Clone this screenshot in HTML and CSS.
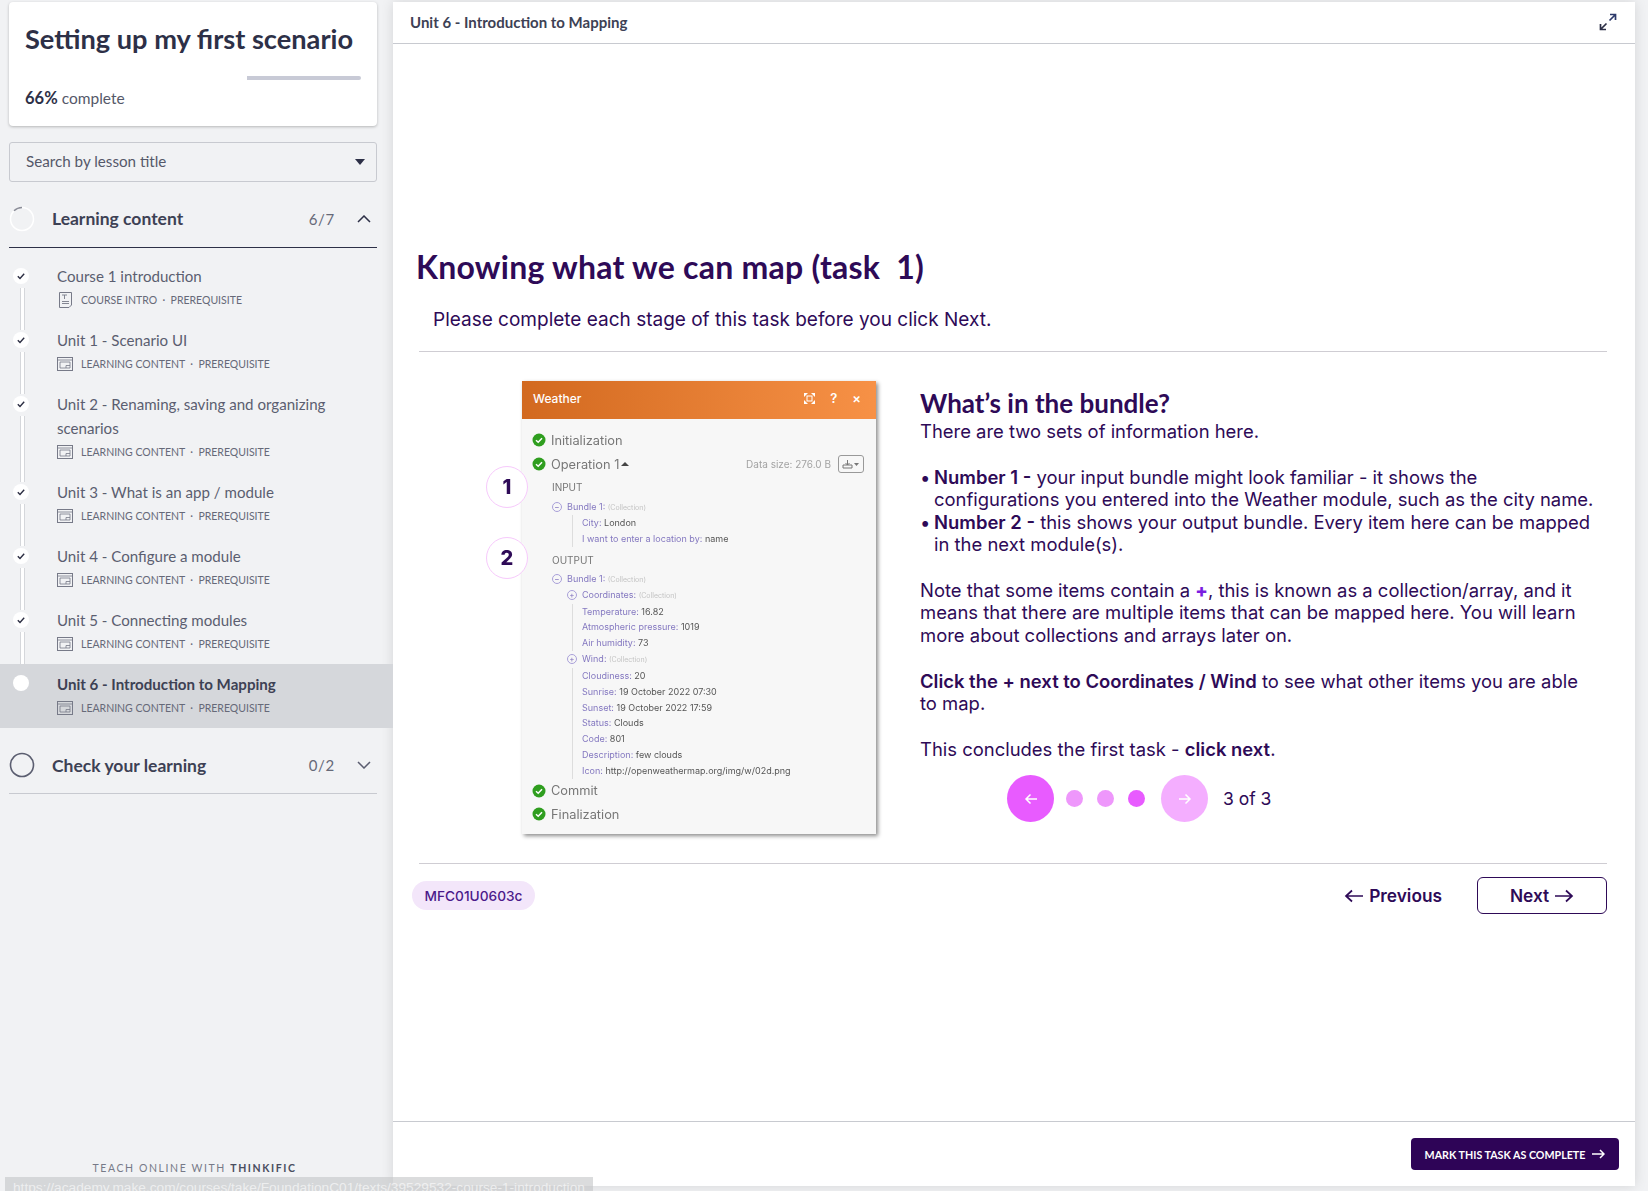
FILE: index.html
```html
<!DOCTYPE html>
<html lang="en">
<head>
  <meta charset="UTF-8" />
  <title>Unit 6 - Introduction to Mapping</title>
  <link rel="stylesheet" href="styles.css">
</head>
<body>
  <svg class="sprite" width="0" height="0">
    <symbol id="ic-screen" viewBox="0 0 16 14">
      <rect x="0.5" y="0.5" width="15" height="13" fill="none" stroke="currentColor"/>
      <path d="M0.5 3h15M3 5h10v6H3zM9 11V8.500h4" fill="none" stroke="currentColor" stroke-width="0.8"/>
    </symbol>
    <symbol id="ic-check" viewBox="0 0 16 16">
      <circle cx="8" cy="8" r="8" fill="#fff"/>
      <path d="M4.800 8.200l2.200 2.200 4.200-4.600" fill="none" stroke="#2b2d42" stroke-width="1.400"/>
    </symbol>
    <symbol id="ic-ok" viewBox="0 0 14 14">
      <circle cx="7" cy="7" r="6.500" fill="#2f9e1f"/>
      <path d="M4 7.200l2.200 2.100L10 5.200" fill="none" stroke="#fff" stroke-width="1.500"/>
    </symbol>
  </svg>

  <aside class="sidebar">
    <div class="course-card">
      <h1>Setting up my first scenario</h1>
      <div class="progress"><span class="progress-done"></span></div>
      <p class="progress-text"><b>66%</b> complete</p>
    </div>

    <div class="search">
      <span>Search by lesson title</span>
      <span class="caret"></span>
    </div>

    <div class="chapter chapter-open">
      <svg class="ring" width="26" height="26" viewBox="0 0 26 26">
        <circle cx="13" cy="13" r="11.500" fill="none" stroke="#fff" stroke-width="1.500"/>
        <path d="M5 4.800A11.500 11.500 0 0 1 13 1.500" fill="none" stroke="#8b8d98" stroke-width="1.500"/>
      </svg>
      <span class="chapter-name">Learning content</span>
      <span class="chapter-count">6/7</span>
      <svg class="chevron" width="14" height="8" viewBox="0 0 14 8"><path d="M1 7l6-6 6 6" fill="none" stroke="#2d3047" stroke-width="1.500"/></svg>
    </div>

    <ul class="lessons">
      <li class="lesson done">
        <svg class="dot" width="16" height="16"><use href="#ic-check"/></svg>
        <div class="lesson-title">Course 1 introduction</div>
        <div class="lesson-meta"><svg class="meta-icon doc" width="13" height="16" viewBox="0 0 13 16">
            <path d="M0.500 0.500h12v12.500l-2.500 2.500h-9.500z" fill="none" stroke="currentColor"/>
            <path d="M3 3h5M5.500 3v4M3 9.500h7M3 11.500h7" fill="none" stroke="currentColor" stroke-width="0.900"/>
          </svg>COURSE INTRO &nbsp;·&nbsp; PREREQUISITE</div>
      </li>
      <li class="lesson done">
        <svg class="dot" width="16" height="16"><use href="#ic-check"/></svg>
        <div class="lesson-title">Unit 1 - Scenario UI</div>
        <div class="lesson-meta"><svg class="meta-icon" width="16" height="14"><use href="#ic-screen"/></svg>LEARNING CONTENT &nbsp;·&nbsp; PREREQUISITE</div>
      </li>
      <li class="lesson done">
        <svg class="dot" width="16" height="16"><use href="#ic-check"/></svg>
        <div class="lesson-title">Unit 2 - Renaming, saving and organizing scenarios</div>
        <div class="lesson-meta"><svg class="meta-icon" width="16" height="14"><use href="#ic-screen"/></svg>LEARNING CONTENT &nbsp;·&nbsp; PREREQUISITE</div>
      </li>
      <li class="lesson done">
        <svg class="dot" width="16" height="16"><use href="#ic-check"/></svg>
        <div class="lesson-title">Unit 3 - What is an app / module</div>
        <div class="lesson-meta"><svg class="meta-icon" width="16" height="14"><use href="#ic-screen"/></svg>LEARNING CONTENT &nbsp;·&nbsp; PREREQUISITE</div>
      </li>
      <li class="lesson done">
        <svg class="dot" width="16" height="16"><use href="#ic-check"/></svg>
        <div class="lesson-title">Unit 4 - Configure a module</div>
        <div class="lesson-meta"><svg class="meta-icon" width="16" height="14"><use href="#ic-screen"/></svg>LEARNING CONTENT &nbsp;·&nbsp; PREREQUISITE</div>
      </li>
      <li class="lesson done">
        <svg class="dot" width="16" height="16"><use href="#ic-check"/></svg>
        <div class="lesson-title">Unit 5 - Connecting modules</div>
        <div class="lesson-meta"><svg class="meta-icon" width="16" height="14"><use href="#ic-screen"/></svg>LEARNING CONTENT &nbsp;·&nbsp; PREREQUISITE</div>
      </li>
      <li class="lesson current">
        <span class="dot dot-plain"></span>
        <div class="lesson-title">Unit 6 - Introduction to Mapping</div>
        <div class="lesson-meta"><svg class="meta-icon" width="16" height="14"><use href="#ic-screen"/></svg>LEARNING CONTENT &nbsp;·&nbsp; PREREQUISITE</div>
      </li>
    </ul>

    <div class="chapter chapter-closed">
      <svg class="ring" width="26" height="26" viewBox="0 0 26 26">
        <circle cx="13" cy="13" r="11.500" fill="none" stroke="#5b5e70" stroke-width="1.600"/>
      </svg>
      <span class="chapter-name">Check your learning</span>
      <span class="chapter-count">0/2</span>
      <svg class="chevron" width="14" height="8" viewBox="0 0 14 8"><path d="M1 1l6 6 6-6" fill="none" stroke="#5b5e70" stroke-width="1.500"/></svg>
    </div>

    <div class="powered">TEACH ONLINE WITH <b>THINKIFIC</b></div>
  </aside>

  <main class="player">
    <header class="player-head">
      <span>Unit 6 - Introduction to Mapping</span>
      <svg width="18" height="18" viewBox="0 0 18 18">
        <path d="M10.500 7.500L16 2M11 1.500h5.500V7" fill="none" stroke="#2d3a6b" stroke-width="1.700"/>
        <path d="M7.500 10.500L2 16M7 16.500H1.500V11" fill="none" stroke="#2d3047" stroke-width="1.700"/>
      </svg>
    </header>

    <section class="player-body">
      <h2>Knowing what we can map (task&nbsp; 1)</h2>
      <p class="intro">Please complete each stage of this task before you click Next.</p>
      <hr>

      <div class="task">
        <div class="markers">
          <span class="marker">1</span>
          <span class="marker">2</span>
        </div>

        <div class="weather">
          <div class="weather-head">
            <span>Weather</span>
            <span class="weather-tools">
              <svg width="11" height="11" viewBox="0 0 11 11"><path d="M0 0h4L0 4zM11 0v4L7 0zM0 11V7l4 4zM11 11H7l4-4z" fill="#fff"/><rect x="3" y="3" width="5" height="5" fill="none" stroke="#fff"/></svg>
              <i>?</i>
              <i>×</i>
            </span>
          </div>
          <div class="weather-body">
            <div class="stage"><svg width="14" height="14"><use href="#ic-ok"/></svg>Initialization</div>
            <div class="stage stage-op">
              <svg width="14" height="14"><use href="#ic-ok"/></svg>Operation 1 <span class="up"></span>
              <span class="data-size">Data size: 276.0 B</span>
              <span class="data-btn">
                <svg width="18" height="10" viewBox="0 0 18 10"><path d="M1 6h9v3H1zM5.500 1v5M3.500 4l2 2 2-2" fill="none" stroke="#777"/><path d="M12 4h5l-2.500 3z" fill="#777"/></svg>
              </span>
            </div>
            <div class="tree">
              <div class="tree-title">INPUT</div>
              <div class="row bundle"><span class="toggle">−</span><em>Bundle 1:</em> <small>(Collection)</small></div>
              <div class="row lv2"><em>City:</em> London</div>
              <div class="row lv2"><em>I want to enter a location by:</em> name</div>
              <div class="tree-title tree-out">OUTPUT</div>
              <div class="row bundle"><span class="toggle">−</span><em>Bundle 1:</em> <small>(Collection)</small></div>
              <div class="row sub"><span class="toggle">+</span><em>Coordinates:</em> <small>(Collection)</small></div>
              <div class="row lv2"><em>Temperature:</em> 16.82</div>
              <div class="row lv2"><em>Atmospheric pressure:</em> 1019</div>
              <div class="row lv2"><em>Air humidity:</em> 73</div>
              <div class="row sub"><span class="toggle">+</span><em>Wind:</em> <small>(Collection)</small></div>
              <div class="row lv2"><em>Cloudiness:</em> 20</div>
              <div class="row lv2"><em>Sunrise:</em> 19 October 2022 07:30</div>
              <div class="row lv2"><em>Sunset:</em> 19 October 2022 17:59</div>
              <div class="row lv2"><em>Status:</em> Clouds</div>
              <div class="row lv2"><em>Code:</em> 801</div>
              <div class="row lv2"><em>Description:</em> few clouds</div>
              <div class="row lv2"><em>Icon:</em> http://openweathermap.org/img/w/02d.png</div>
            </div>
            <div class="stage"><svg width="14" height="14"><use href="#ic-ok"/></svg>Commit</div>
            <div class="stage stage-last"><svg width="14" height="14"><use href="#ic-ok"/></svg>Finalization</div>
          </div>
        </div>

        <div class="copy">
          <h3>What’s in the bundle?</h3>
          <p>There are two sets of information here.</p>
          <ul>
            <li><b>Number 1 -</b> your input bundle might look familiar - it shows the configurations you entered into the Weather module, such as the city name.</li>
            <li><b>Number 2 -</b> this shows your output bundle. Every item here can be mapped in the next module(s).</li>
          </ul>
          <p>Note that some items contain a <b class="plus">+</b>, this is known as a collection/array, and it means that there are multiple items that can be mapped here. You will learn more about collections and arrays later on.</p>
          <p><b>Click the + next to Coordinates / Wind</b> to see what other items you are able to map.</p>
          <p>This concludes the first task - <b>click next</b>.</p>
          <div class="pager">
            <span class="pager-btn">
              <svg width="14" height="12" viewBox="0 0 14 12"><path d="M13 6H2M6.500 1.500L2 6l4.500 4.500" fill="none" stroke="#fff" stroke-width="1.500"/></svg>
            </span>
            <span class="pip"></span>
            <span class="pip"></span>
            <span class="pip pip-on"></span>
            <span class="pager-btn pager-off">
              <svg width="14" height="12" viewBox="0 0 14 12"><path d="M1 6h11M7.500 1.500L12 6l-4.500 4.500" fill="none" stroke="#fff" stroke-width="1.500"/></svg>
            </span>
            <span class="pager-text">3 of 3</span>
          </div>
        </div>
      </div>

      <hr class="rule-end">

      <div class="task-nav">
        <span class="code-tag">MFC01U0603c</span>
        <a class="nav-prev">
          <svg width="20" height="14" viewBox="0 0 20 14"><path d="M19 7H2M8 1.500L2 7l6 5.500" fill="none" stroke="#2e0a57" stroke-width="1.700"/></svg>
          Previous
        </a>
        <a class="nav-next">
          Next
          <svg width="20" height="14" viewBox="0 0 20 14"><path d="M1 7h17M12 1.500L18 7l-6 5.500" fill="none" stroke="#2e0a57" stroke-width="1.700"/></svg>
        </a>
      </div>
    </section>

    <footer class="player-foot">
      <button type="button">MARK THIS TASK AS COMPLETE
        <svg width="13" height="10" viewBox="0 0 13 10"><path d="M0 5h11.500M8 1l4 4-4 4" fill="none" stroke="#fff" stroke-width="1.500"/></svg>
      </button>
    </footer>
  </main>

  <div class="status-bar">https://academy.make.com/courses/take/FoundationC01/texts/39529532-course-1-introduction</div>
</body>
</html>
```

FILE: styles.css
```css
* {
    box-sizing: border-box;
}
html, body {
    height: 100%;
}
body {
    margin: 0;
    height: 1191px;
    overflow: hidden;
    display: flex;
    background: #f1f2f4;
    font-family: "Inter", Arial, sans-serif;
    color: #2e0a57;
}
.sprite {
    position: absolute;
}

/* sidebar */
.sidebar {
    width: 393px;
    flex: none;
    display: flex;
    flex-direction: column;
    padding-top: 2px;
    font-family: "Lato", Arial, sans-serif;
    color: #3d4154;
}
.course-card {
    width: 368px;
    height: 124px;
    margin-left: 9px;
    padding: 18px 16px 0;
    background: #fff;
    border-radius: 4px;
    box-shadow: 0 1px 3px rgba(0,0,0,.25);
}
.course-card h1 {
    margin: 0;
    font-size: 27.200px;
    line-height: 37px;
    font-weight: 700;
    color: #2d3047;
    white-space: nowrap;
}
.progress {
    height: 4px;
    margin-top: 19px;
    background: #c8cad6;
    border-radius: 2px;
}
.progress-done {
    display: block;
    width: 66%;
    height: 4px;
    background: #fff;
}
.progress-text {
    margin: 8px 0 0;
    font-size: 15.500px;
    line-height: 20px;
    color: #555869;
}
.progress-text b {
    font-size: 16.500px;
    font-weight: 700;
    color: #2d3047;
}
.search {
    width: 368px;
    height: 40px;
    margin: 16px 0 0 9px;
    padding: 0 11px 0 16px;
    display: flex;
    align-items: center;
    justify-content: space-between;
    border: 1px solid #c8cad0;
    border-radius: 3px;
    font-size: 15.200px;
    line-height: 36px;
    color: #555869;
}
.search span:first-child {
    margin-top: -2px;
}
.caret {
    border-left: 5px solid transparent;
    border-right: 5px solid transparent;
    border-top: 6px solid #2d3047;
}
.chapter {
    width: 368px;
    margin-left: 9px;
    display: flex;
    align-items: center;
    border-bottom: 1px solid #2d3047;
}
.chapter-open {
    height: 66px;
    padding-top: 8px;
}
.chapter-closed {
    height: 66px;
    padding-top: 9px;
    border-bottom-color: #c8cad0;
}
.ring {
    flex: none;
    margin-right: 17px;
}
.chapter-name {
    flex: 1;
    font-size: 17.500px;
    font-weight: 700;
    color: #3d4154;
}
.chapter-count {
    font-size: 15px;
    letter-spacing: .7px;
    color: #666978;
    margin-right: 22px;
}
.chevron {
    margin-right: 6px;
}
.lessons {
    list-style: none;
    margin: 8px 0 0;
    padding: 0;
}
.lesson {
    position: relative;
    padding: 8px 40px 0 57px;
    height: 64px;
}
.lesson:nth-child(3) {
    height: 88px;
}
.lesson.done::after {
    content: "";
    position: absolute;
    left: 20px;
    top: 32px;
    bottom: -10px;
    width: 3px;
    background: #fff;
    border-left: 1px solid #d5d7db;
    border-right: 1px solid #d5d7db;
}
.dot {
    position: absolute;
    left: 13px;
    top: 12px;
}
.dot-plain {
    width: 16px;
    height: 16px;
    top: 11px;
    border-radius: 50%;
    background: #fff;
}
.lesson-title {
    font-size: 15.100px;
    line-height: 24px;
    color: #5b5e70;
}
.lesson-meta {
    display: flex;
    align-items: center;
    height: 22px;
    margin-top: 1px;
    font-size: 10.500px;
    color: #666978;
    white-space: pre;
}
.meta-icon {
    flex: none;
    margin-right: 8px;
    color: #777a88;
}
.meta-icon.doc {
    margin: 0 9px 0 2px;
}
.current {
    background: #d5d7db;
}
.current .lesson-title {
    font-weight: 700;
    color: #3d4154;
}
.powered {
    margin-top: auto;
    margin-bottom: 17px;
    padding-right: 4px;
    text-align: center;
    font-size: 10.500px;
    letter-spacing: 1.600px;
    color: #777a88;
}
.powered b {
    font-weight: 700;
    color: #4a4e60;
}

/* player */
.player {
    width: 1242px;
    height: 1184px;
    margin-top: 2px;
    flex: none;
    display: flex;
    flex-direction: column;
    background: #fff;
    box-shadow: 0 0 12px rgba(0,0,0,.12);
}
.player-head {
    height: 42px;
    flex: none;
    padding: 0 18px 2px 17px;
    display: flex;
    align-items: center;
    justify-content: space-between;
    border-bottom: 1px solid #c8cad0;
    font-family: "Lato", Arial, sans-serif;
    font-weight: 700;
    font-size: 15px;
    color: #3d4154;
}
.player-body {
    flex: 1;
    padding: 201px 28px 0 26px;
}
.player-body h2 {
    margin: 0 0 0 -3px;
    font-family: "Lato", Arial, sans-serif;
    font-size: 32px;
    line-height: 44px;
    font-weight: 700;
    letter-spacing: .25px;
    color: #2e0a57;
}
.intro {
    margin: 19px 0 0 14px;
    font-size: 19px;
    line-height: 24px;
    color: #2e0a57;
}
.player-body hr {
    height: 1px;
    margin: 19px 0 0;
    border: 0;
    background: #cfcdd3;
}
.task {
    display: flex;
    height: 511px;
}
.markers {
    width: 103px;
    flex: none;
    padding-top: 114px;
    display: flex;
    flex-direction: column;
    align-items: flex-end;
    gap: 29px;
    position: relative;
    z-index: 1;
}
.marker {
    width: 42px;
    height: 42px;
    margin-right: -6px;
    display: flex;
    align-items: center;
    justify-content: center;
    border: 1px solid #f6c9fb;
    border-radius: 50%;
    background: #fff;
    font-size: 20px;
    font-weight: 800;
    color: #2e0a57;
}

/* weather module shot */
.weather {
    width: 354px;
    height: 453px;
    margin-top: 29px;
    flex: none;
    background: #f7f7f7;
    box-shadow: 2px 2px 4px rgba(0,0,0,.45);
    filter: blur(.5px);
}
.weather-head {
    height: 38px;
    padding: 0 15px 4px 11px;
    display: flex;
    align-items: center;
    justify-content: space-between;
    background: linear-gradient(90deg, #d2691f, #f79146);
    color: #fff;
    font-size: 12px;
    font-weight: 500;
}
.weather-tools {
    display: flex;
    align-items: center;
    gap: 15px;
}
.weather-tools i {
    font-style: normal;
    font-size: 13px;
    font-weight: 600;
}
.weather-body {
    padding: 9px 12px 0 10px;
}
.stage {
    display: flex;
    align-items: center;
    gap: 5px;
    height: 24px;
    font-size: 12.800px;
    color: #777;
}
.stage-last {
    height: 23px;
}
.up {
    width: 0;
    height: 0;
    margin-left: -3px;
    border-left: 4px solid transparent;
    border-right: 4px solid transparent;
    border-bottom: 4px solid #444;
}
.data-size {
    margin-left: auto;
    margin-right: 2px;
    font-size: 10px;
    color: #a3a3a3;
}
.data-btn {
    width: 26px;
    height: 18px;
    display: flex;
    align-items: center;
    justify-content: center;
    border: 1px solid #999;
    border-radius: 3px;
}
.tree {
    padding: 3px 0 0 20px;
    font-size: 9px;
    line-height: 15.850px;
    color: #555;
}
.tree-title {
    height: 20px;
    font-size: 10px;
    line-height: 16px;
    color: #777;
}
.tree-out {
    margin-top: 5px;
    height: 19px;
}
.row em {
    font-style: normal;
    color: #8478c0;
}
.row small {
    font-size: 7px;
    color: #c4c4c4;
}
.bundle {
    padding-left: 15px;
    position: relative;
    height: 16px;
}
.sub {
    padding-left: 30px;
    position: relative;
}
.lv2 {
    padding-left: 30px;
    background: linear-gradient(#ddd, #ddd) 20px 0 / 1px 100% no-repeat;
}
.toggle {
    position: absolute;
    width: 10px;
    height: 10px;
    margin: 3px 0 0 -15px;
    border: 1px solid #a89fd8;
    border-radius: 50%;
    color: #7d6dbb;
    font-size: 8px;
    line-height: 8px;
    text-align: center;
}

/* text column */
.copy {
    margin: 36px 12px 0 44px;
    flex: 1;
    font-size: 18.450px;
    line-height: 22.400px;
    color: #2e0a57;
}
.copy h3 {
    margin: 0 0 2px;
    font-family: "Lato", Arial, sans-serif;
    font-size: 26px;
    line-height: 30px;
    font-weight: 700;
}
.copy p {
    margin: 0 0 23.500px;
}
.copy p:last-of-type {
    margin-bottom: 0;
}
.copy b {
    font-weight: 600;
}
.copy .plus {
    color: #7a1ee0;
    font-weight: 800;
}
.copy ul {
    list-style: none;
    margin: 0 0 23.500px;
    padding: 0 0 0 14px;
}
.copy li {
    position: relative;
}
.copy li::before {
    content: "•";
    position: absolute;
    left: -14px;
}
.pager {
    display: flex;
    align-items: center;
    margin: 15px 0 0 87px;
}
.pager-btn {
    width: 47px;
    height: 47px;
    display: flex;
    align-items: center;
    justify-content: center;
    border-radius: 50%;
    background: #e85bff;
}
.pager-off {
    margin-left: 16px;
    background: #f4aeff;
}
.pip {
    width: 17px;
    height: 17px;
    margin-left: 14px;
    border-radius: 50%;
    background: #ee97fb;
}
.pager-btn + .pip {
    margin-left: 12px;
}
.pip-on {
    background: #e85bff;
}
.pager-text {
    margin-left: 15px;
    font-size: 17.500px;
}
.player-body hr.rule-end {
    margin: 0;
}
.task-nav {
    display: flex;
    align-items: center;
    margin-top: 13px;
}
.code-tag {
    width: 123px;
    height: 29px;
    margin-left: -7px;
    margin-right: auto;
    display: flex;
    align-items: center;
    justify-content: center;
    border-radius: 15px;
    background: #f3e6fa;
    font-size: 13.700px;
    font-weight: 500;
    color: #4b1a8a;
}
.nav-prev, .nav-next {
    display: flex;
    align-items: center;
    gap: 5px;
    font-size: 17.300px;
    font-weight: 600;
    color: #2e0a57;
}
.nav-next {
    width: 130px;
    height: 37px;
    margin-left: 35px;
    justify-content: center;
    border: 1.500px solid #2e0a57;
    border-radius: 6px;
}
.player-foot {
    height: 65px;
    flex: none;
    padding: 16px 16px 0 0;
    display: flex;
    justify-content: flex-end;
    border-top: 1px solid #c8cad0;
}
.player-foot button {
    width: 208px;
    height: 32px;
    display: flex;
    align-items: center;
    justify-content: center;
    gap: 7px;
    padding: 0;
    border: 0;
    border-radius: 4px;
    background: #2e0457;
    font-family: "Lato", Arial, sans-serif;
    font-size: 10.700px;
    font-weight: 700;
    color: #fff;
}

/* browser link preview lying over the page */
.status-bar {
    position: absolute;
    left: 5px;
    top: 1177px;
    width: 588px;
    height: 14px;
    padding-left: 8px;
    overflow: hidden;
    background: rgba(195,196,199,.6);
    font-family: "Liberation Sans", Arial, sans-serif;
    font-size: 13.700px;
    line-height: 22px;
    color: rgba(255,255,255,.6);
    white-space: nowrap;
}
```
